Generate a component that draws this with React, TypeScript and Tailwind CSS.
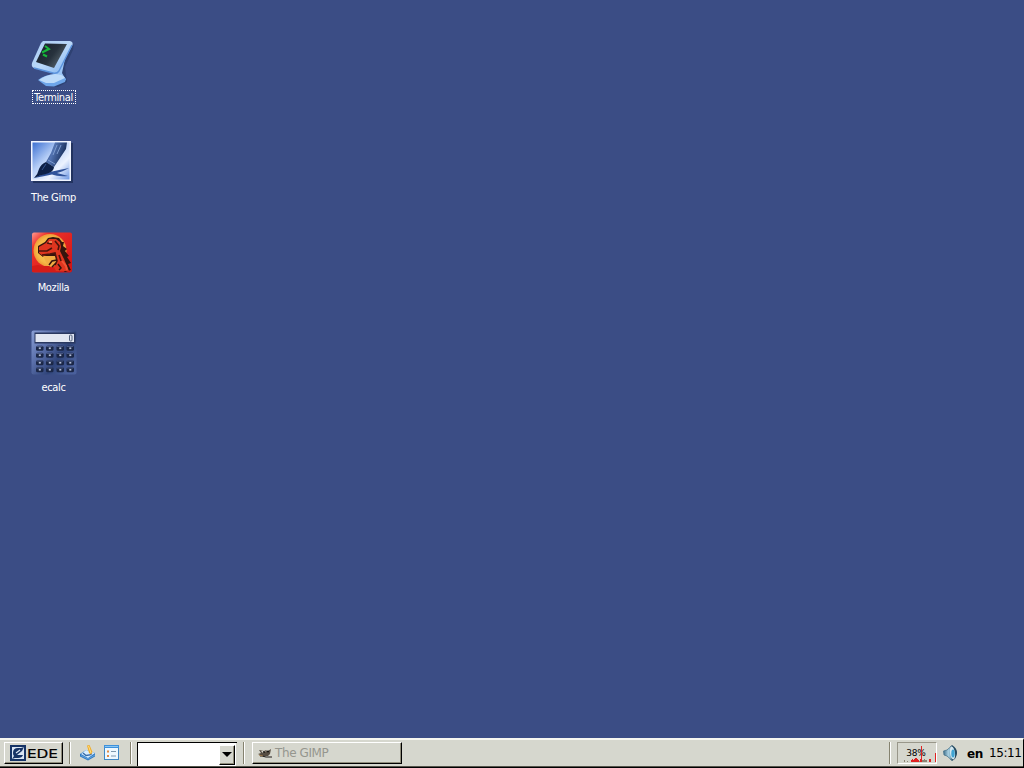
import type { ReactNode } from "react";

function TerminalIcon() {
  return (
    <svg width="44" height="48" viewBox="0 0 44 48">
      <defs>
        <linearGradient id="frame" x1="0" y1="0" x2="1" y2="1">
          <stop offset="0" stopColor="#a9cbf2" />
          <stop offset="0.5" stopColor="#b9d8f9" />
          <stop offset="1" stopColor="#79aeee" />
        </linearGradient>
        <linearGradient id="screen" x1="0" y1="0" x2="1" y2="0.6">
          <stop offset="0" stopColor="#141c28" />
          <stop offset="0.6" stopColor="#27323d" />
          <stop offset="1" stopColor="#5b6872" />
        </linearGradient>
      </defs>
      <path d="M39 8L43 4L42 10L34 27L36 42L27 47L20 46L27 35Z" fill="#22355f" opacity="0.5" />
      <path d="M18 30L34 19L31 33L35 40L20 40L23 34Z" fill="#9bc5f5" />
      <path d="M7 40Q13 35 24 34Q32 34 35 39L34 42L23 46.500L15 46Z" fill="#6ea6ea" />
      <path d="M8 40Q14 35 24 34Q32 34 34 38L23 43L15 43Z" fill="#bddbfa" />
      <path d="M12 1L39 1Q43 2 41 6L28 31Q26 34 22 33L3 28Q0 27 1 23L10 3Z" fill="url(#frame)" />
      <path d="M41 5L28 31Q26 34 22 33L3 28" fill="none" stroke="#5b93dd" strokeWidth="1.4" />
      <path d="M14 3.500L36 4L23 28L5 22Z" fill="url(#screen)" />
      <path d="M14 6L18 9L11 12.500" fill="none" stroke="#16b83a" strokeWidth="2" />
      <path d="M12 14.500L16 16.500" stroke="#16b83a" strokeWidth="2" />
    </svg>
  );
}

function GimpIcon() {
  return (
    <svg width="44" height="44" viewBox="0 0 44 44">
      <defs>
        <linearGradient id="paper" x1="0" y1="0" x2="1" y2="1">
          <stop offset="0" stopColor="#3c70d2" />
          <stop offset="0.4" stopColor="#b7cff7" />
          <stop offset="0.7" stopColor="#edf3ff" />
          <stop offset="1" stopColor="#6e98e4" />
        </linearGradient>
        <linearGradient id="handle" x1="0" y1="0" x2="1" y2="0.4">
          <stop offset="0" stopColor="#172d5c" />
          <stop offset="0.4" stopColor="#5273b2" />
          <stop offset="1" stopColor="#142953" />
        </linearGradient>
      </defs>
      <rect x="2" y="2" width="40" height="40" fill="#22335f" />
      <rect x="0" y="0" width="40" height="40" fill="#f1f5ff" />
      <rect x="1.5" y="1.5" width="37" height="37" fill="url(#paper)" />
      <path d="M7 35Q20 30 38 27Q31 31 26 32L37 35Q27 36 21 33.500Q13 35 3 37Z" fill="#2f529a" />
      <path d="M24 1.500L36 1.500L35 8L23 26L15 21L20 12Z" fill="url(#handle)" />
      <path d="M26 4L22 14M30 4L26 13M17 19L24 23" fill="none" stroke="#7f9dd0" strokeWidth="1" />
      <path d="M15 21L23 26Q23 31 15 33Q9 34 3 37Q7 33 8 28Q10 23 15 21Z" fill="#0d2047" />
      <path d="M15 23L11 29" stroke="#36558f" strokeWidth="1" />
    </svg>
  );
}

function MozillaIcon() {
  return (
    <svg width="42" height="42" viewBox="0 0 42 42">
      <defs>
        <linearGradient id="red" x1="0" y1="0" x2="1" y2="1">
          <stop offset="0" stopColor="#ff9a90" />
          <stop offset="0.2" stopColor="#ee332b" />
          <stop offset="1" stopColor="#cf1013" />
        </linearGradient>
        <radialGradient id="sun">
          <stop offset="0" stopColor="#ffd060" />
          <stop offset="0.8" stopColor="#f5b746" />
          <stop offset="1" stopColor="#ef9937" />
        </radialGradient>
      </defs>
      <rect x="1" y="0.5" width="40" height="40" rx="2" fill="url(#red)" />
      <circle cx="19" cy="18.500" r="16.5" fill="url(#sun)" />
      <path d="M1 34L7 33L11 34L18 34L23 37L40 35V40H1Z" fill="#d51c18" />
      <path d="M7 14L14 10L17 6L22 5L28 6L31 10L33 10L32 14L36 17L34 19L38 24L36 25L40 31L37 32L40 38L34 40L29 36L27 24L12 25L7 21Z" fill="#34140d" />
      <path d="M12 24H24L26 34H17Z" fill="#f2ad43" />
      <path d="M8 15L15 11L18 7L25 7L29 10L30 15L29 19L33 27L38 39H25L23 35L26 29L24 22L19 22L12 24L8 21Z" fill="#df351f" />
      <path d="M8 19L16 19L21 16M11 23L19 22L24 21L26 29L24 33M16 11L21 12M24 9L28 14L27 18M28 23L30 29" fill="none" stroke="#4b140c" strokeWidth="1.6" />
      <path d="M18 10H21" stroke="#ffd38c" />
      <path d="M26 28L21 29L18 33M25 31L21 35M27 32L30 36L28 38" fill="none" stroke="#34140d" strokeWidth="1.5" />
      <path d="M31 29L35 34L36 38" stroke="#f05535" fill="none" strokeWidth="2" />
    </svg>
  );
}

function CalcIcon() {
  const rows = [18, 25, 32.5, 39.5];
  const cols = [8.5, 18.5, 29, 39];
  return (
    <svg width="46" height="46" viewBox="0 0 46 46">
      <defs>
        <linearGradient id="case" x1="0" y1="0" x2="1" y2="0.7">
          <stop offset="0" stopColor="#8ba0d6" />
          <stop offset="0.35" stopColor="#5c71ac" />
          <stop offset="0.7" stopColor="#30457a" />
          <stop offset="1" stopColor="#4a609c" />
        </linearGradient>
      </defs>
      <rect x="0.5" y="0.5" width="45" height="44" rx="2" fill="url(#case)" />
      <rect x="3.5" y="2.5" width="41" height="11" fill="#2a3860" />
      <rect x="4.5" y="4" width="38.5" height="8" fill="#e1e6f2" />
      <rect x="38.5" y="5" width="2.5" height="6" rx="1" fill="none" stroke="#53617c" />
      {rows.map((y, r) =>
        cols.map((x, c) => (
          <g key={r + "-" + c}>
            <rect x={x - 3.5} y={y - 2.2} width="7.5" height="5" rx="1.5" fill="#1b2747" />
            <path d={`M${x - 3} ${y - 1.5}H${x + 3}`} stroke="#5a6c9c" strokeWidth="0.7" />
            <rect x={x - 0.7} y={y - 0.6} width="2" height="1.7" fill="#b4bdd6" />
          </g>
        )),
      )}
    </svg>
  );
}

function EdeLogo() {
  return (
    <svg className="shrink-0" width="16" height="16" viewBox="0 0 16 16">
      <rect width="16" height="16" fill="#153365" />
      <rect x="2" y="2" width="12" height="12" fill="#d9e5f4" />
      <path d="M3 8Q3 3 8 3H11L14 2L12 6L7 10H13Q12 13 8 13H5L2 14L4 11Q3 10 3 8Z" fill="#153365" />
      <path d="M6 8L10 5M8 9.500H14" stroke="#d9e5f4" strokeWidth="1.2" />
    </svg>
  );
}

function PadIcon() {
  return (
    <svg width="16" height="17" viewBox="0 0 16 17">
      <path d="M0 9L6 5L15 8V11.500L8 15.500L0 11.500Z" fill="#2e79c2" />
      <path d="M1 9L6 5L15 8L8 13Z" fill="#d7edff" />
      <path d="M1 10.500L8 14L15 10" fill="none" stroke="#78b5e8" strokeWidth="0.7" />
      <path d="M3 8L6 10.500L10 10L12 8.500" fill="none" stroke="#3569a6" strokeWidth="1.3" />
      <path d="M7 0.500L9.500 0L12.500 7L11 9.500L9 8Z" fill="#f0ae2b" />
      <path d="M8.500 1L11 8" stroke="#ffdc85" />
    </svg>
  );
}

function ListIcon() {
  return (
    <svg width="16" height="16" viewBox="0 0 16 16">
      <rect x="0.5" y="0.5" width="14" height="14" fill="#eef8ff" stroke="#3f87c4" />
      <rect x="0" y="0" width="15" height="3" fill="#3d91dc" />
      <path d="M1 1.500H14" stroke="#8ac6f3" />
      <rect x="3" y="5.500" width="2" height="2" fill="#e38a43" />
      <rect x="3" y="10" width="2" height="2" fill="#e38a43" />
      <path d="M7 6.500H12M7 11H12" stroke="#6f8ca4" strokeWidth="0.9" />
    </svg>
  );
}

function WilberIcon() {
  return (
    <svg className="shrink-0" width="15" height="12" viewBox="0 0 15 12">
      <path d="M1 3L4 3.500L7 3L10 4L13 2L12 7L10 9L5 9L2 8L0 7L3 6Z" fill="#554c42" />
      <path d="M3 4L6 3L8 4L5 6Z" fill="#d8d5cb" />
      <path d="M5 5H7M9 4.500H11" stroke="#171512" strokeWidth="1.4" />
      <path d="M2 9H4L8 10L14 10" fill="none" stroke="#1c1917" strokeWidth="1.2" />
      <path d="M1 8L5 9" stroke="#9a7546" />
    </svg>
  );
}

function SpeakerIcon() {
  return (
    <svg width="16" height="17" viewBox="0 0 16 17">
      <defs>
        <linearGradient id="cone">
          <stop offset="0" stopColor="#3d6e8b" />
          <stop offset="0.5" stopColor="#a9cfe0" />
          <stop offset="1" stopColor="#5b90aa" />
        </linearGradient>
      </defs>
      <path d="M9 0Q14 3 14 8Q14 13 9 16L7 14V2Z" fill="#234960" />
      <path d="M0.500 6L4 5L8.500 1L10 8L8.500 15L4 11L1 10Z" fill="url(#cone)" stroke="#4b758c" strokeWidth="0.8" />
      <ellipse cx="9.500" cy="8" rx="2.500" ry="6.500" fill="#d4e7ef" transform="rotate(-8 9.500 8)" />
      <ellipse cx="10" cy="8.500" rx="1.700" ry="4" fill="#3fa4d3" />
    </svg>
  );
}

const usage = [
  { x: 6, h: 2, busy: false }, { x: 9, h: 1, busy: false },
  { x: 13, h: 2, busy: true }, { x: 14, h: 3, busy: true }, { x: 15, h: 2, busy: true },
  { x: 16, h: 3, busy: true }, { x: 17, h: 4, busy: true }, { x: 18, h: 4, busy: true },
  { x: 19, h: 3, busy: true }, { x: 20, h: 2, busy: true }, { x: 21, h: 1, busy: false },
  { x: 22, h: 3, busy: true }, { x: 23, h: 16, busy: true }, { x: 24, h: 2, busy: false },
  { x: 25, h: 2, busy: false }, { x: 26, h: 3, busy: false }, { x: 27, h: 2, busy: false },
  { x: 28, h: 2, busy: false }, { x: 31, h: 3, busy: true }, { x: 32, h: 3, busy: true },
  { x: 37, h: 9, busy: true },
];

function CpuChart() {
  return (
    <svg className="absolute inset-0" width="38" height="20" viewBox="0 0 38 20">
      {usage.map(({ x, h, busy }) => (
        <rect key={x} x={x} y={19 - h} width="1" height={h} fill={busy ? "#e02222" : "#8d8474"} />
      ))}
    </svg>
  );
}

function Shortcut({ label, icon, box, selected = false }: { label: string; icon: ReactNode; box: string; selected?: boolean }) {
  return (
    <div className={`flex w-[107px] flex-col ${box}`}>
      <div className="ml-[31px] flex-1">{icon}</div>
      <div className="flex h-[14px] justify-center">
        <span className={`flex h-[14px] items-center justify-center whitespace-nowrap border border-dotted pt-[2px] text-[11px] leading-3 tracking-[-0.35px] text-white ${selected ? "w-[44px] border-white" : "w-[48px] border-transparent"}`}>
          {label}
        </span>
      </div>
    </div>
  );
}

function Separator() {
  return <div className="h-[22px] w-[2px] shrink-0 border-l border-[#85826f] bg-white" />;
}

const raised = "border border-b-black border-l-white border-r-black border-t-white shadow-[inset_-1px_-1px_0_#908d7c]";

export default function App() {
  return (
    <div className="flex h-screen w-screen flex-col overflow-hidden bg-[#3b4d85] font-['DejaVu_Sans_Condensed','DejaVu_Sans',sans-serif]">
      <main className="flex flex-1 flex-col pt-10">
        <Shortcut label="Terminal" icon={<TerminalIcon />} box="h-[64px]" selected />
        <Shortcut label="The Gimp" icon={<GimpIcon />} box="mt-[37px] h-[63px]" />
        <Shortcut label="Mozilla" icon={<MozillaIcon />} box="mt-[28px] h-[62px]" />
        <Shortcut label="ecalc" icon={<CalcIcon />} box="mt-[36px] h-[64px]" />
      </main>
      <footer className="flex h-[30px] shrink-0 items-start border-b border-r border-t-2 border-b-black border-r-black border-t-[#f6f6f1] bg-[#d6d7ce] pl-1 pt-[2px] font-['DejaVu_Sans',sans-serif] text-black shadow-[inset_0_-1px_0_#55544b]">
        <button className={`flex h-[22px] w-[59px] items-center pl-[5px] ${raised}`}>
          <EdeLogo />
          <span className="ml-px mt-[2px] origin-left scale-x-[1.17] text-[13px] leading-4 [-webkit-text-stroke:0.2px_black]">EDE</span>
        </button>
        <div className="ml-[6px] flex"><Separator /></div>
        <div className="ml-[9px] mt-[3px] flex gap-[8px]">
          <PadIcon />
          <ListIcon />
        </div>
        <div className="ml-[10px] flex"><Separator /></div>
        <div className="ml-[5px] flex h-6 w-[100px] justify-end border-l border-t border-l-black border-t-black bg-white pr-[2px] pt-[2px] shadow-[inset_-1px_0_0_#d6d7ce]">
          <button className={`flex h-[20px] w-4 items-center justify-center bg-[#d6d7ce] ${raised}`}>
            <svg className="-mt-px shrink-0" width="10" height="5" viewBox="0 0 10 5"><path d="M0 0H10L5 5Z" fill="black" /></svg>
          </button>
        </div>
        <div className="ml-[6px] flex"><Separator /></div>
        <button className={`ml-[7px] flex h-[22px] w-[150px] items-center pl-[5px] ${raised}`}>
          <WilberIcon />
          <span className="ml-[2px] text-[12px] leading-4 tracking-[-0.4px] text-[#95968e]">The GIMP</span>
        </button>
        <div className="ml-auto flex"><Separator /></div>
        <div className="relative ml-[6px] flex h-[22px] w-[40px] shrink-0 justify-center border border-b-white border-l-[#99978a] border-r-white border-t-[#99978a] pt-[4px] pr-[2px]">
          <span className="whitespace-nowrap text-[9px] leading-3 tracking-[-0.2px]">38%</span>
          <CpuChart />
        </div>
        <div className="ml-[6px] mt-[3px] w-4"><SpeakerIcon /></div>
        <span className="ml-[8px] mt-[4px] w-[17px] text-[12px] font-bold leading-4 tracking-[-0.3px]">en</span>
        <span className="ml-[5px] mt-[3px] w-[34px] whitespace-nowrap text-[12px] leading-4 tracking-[-0.4px]">15:11</span>
      </footer>
    </div>
  );
}
